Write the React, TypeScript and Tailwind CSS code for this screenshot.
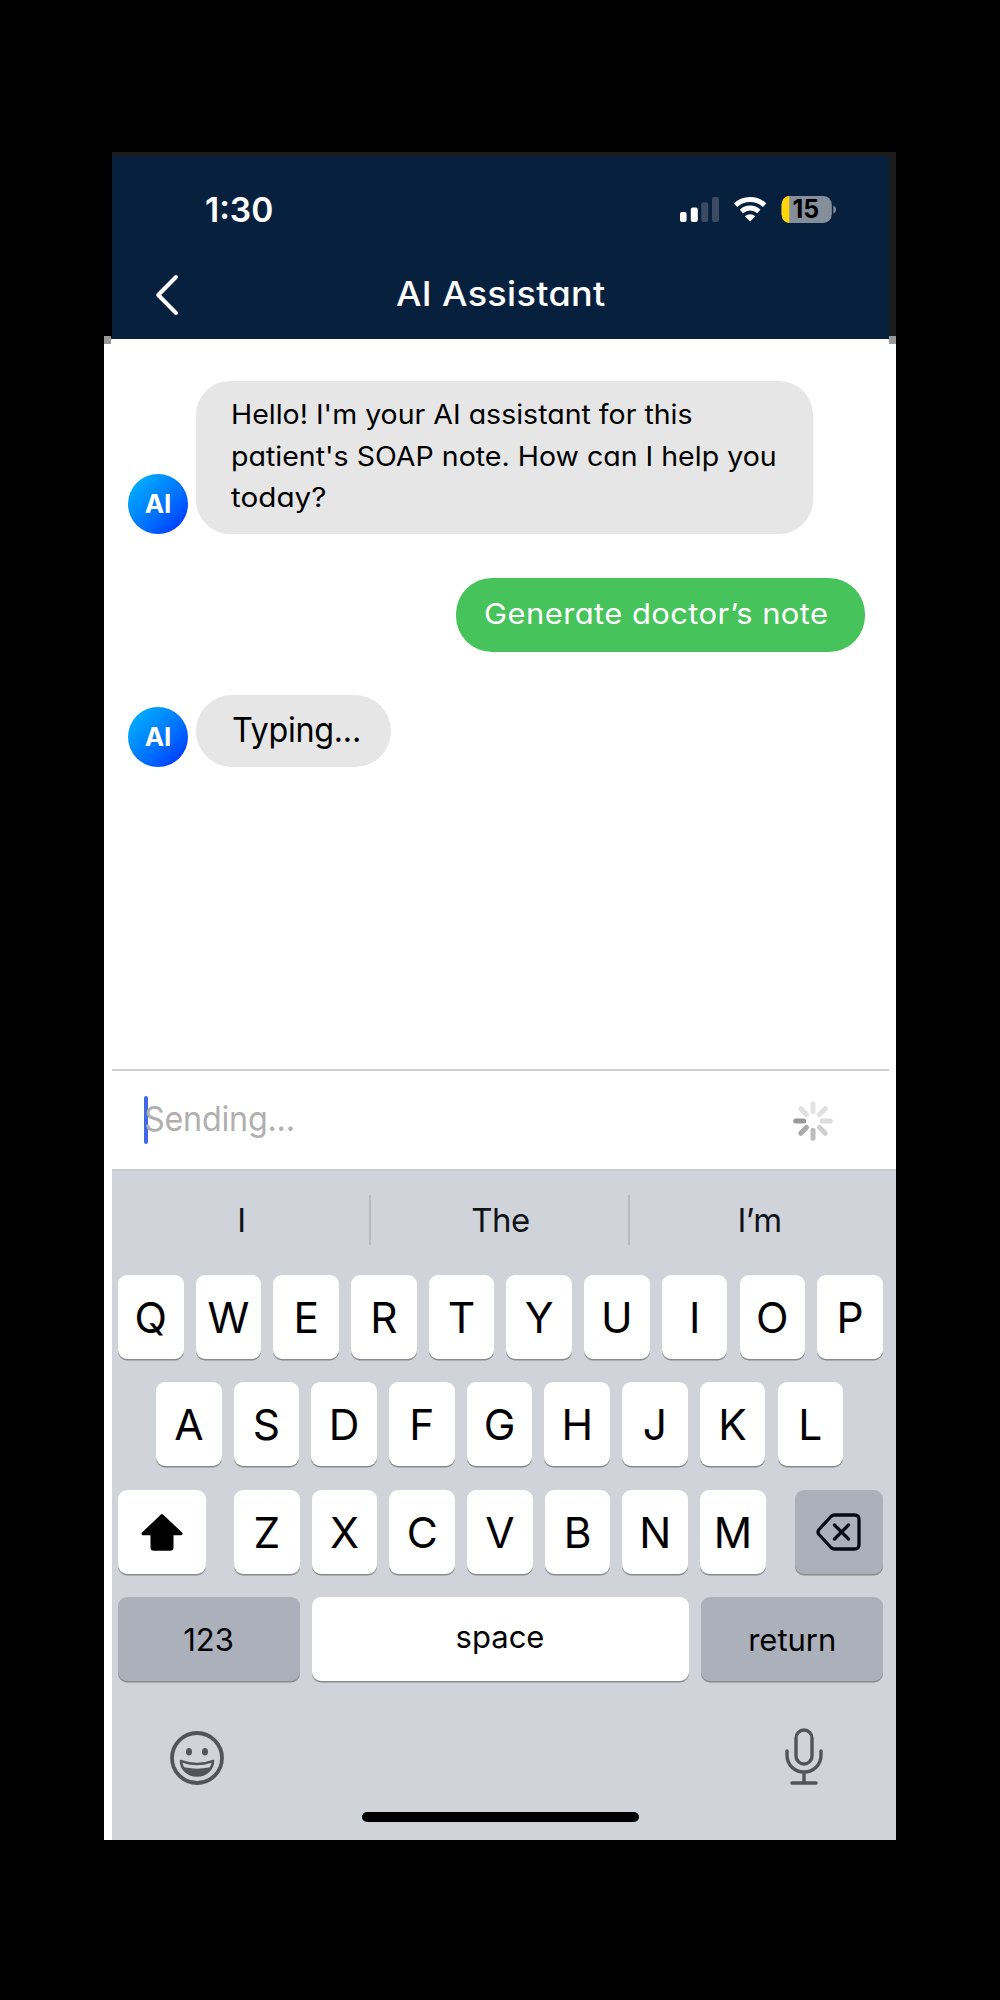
import React from "react";

const INTER = "font-['Inter',sans-serif]";
const GEO = "font-['Inter',sans-serif] [font-feature-settings:'cv11'_1]";

function StatusIcons() {
  return (
    <svg className="block" width="158" height="30" viewBox="679 195 158 30" fill="none">
      <rect x="680" y="212" width="6.6" height="10" rx="2" fill="#fff" />
      <rect x="690.8" y="207.6" width="7" height="14.4" rx="2" fill="#fff" />
      <rect x="701.2" y="202.2" width="7" height="19.8" rx="2" fill="#3a4b63" />
      <rect x="712" y="197" width="7" height="25" rx="2" fill="#3a4b63" />
      <path d="M735.6 205.2a21.2 21.2 0 0 1 29 0" stroke="#fff" strokeWidth="5" />
      <path d="M741.4 211.4a12.8 12.8 0 0 1 17.4 0" stroke="#fff" strokeWidth="4.8" />
      <path d="M744.9 216.2a8 8 0 0 1 10.4 0l-5.2 5.2z" fill="#fff" />
      <rect x="781.6" y="196" width="50.2" height="27" rx="8.5" fill="#858e9b" />
      <path d="M789.3 196v27a7.7 8.5 0 0 1-7.7-8.5v-10a7.7 8.5 0 0 1 7.7-8.5z" fill="#ffd60a" />
      <path d="M833.4 205.4c3.4 1.3 3.4 6.9 0 8.2z" fill="#858e9b" />
    </svg>
  );
}

function Avatar() {
  return (
    <div className={`${INTER} flex h-[60px] w-[60px] shrink-0 items-center justify-center rounded-full bg-linear-to-br from-[#00a8ff] from-15% to-[#0040ff] to-85% text-[26px] leading-none font-bold text-white`}>
      AI
    </div>
  );
}

const SPOKES = ["#e3e3e3", "#e0e0e0", "#dedede", "#cfcfcf", "#bdbdbd", "#a9a9a9", "#989898", "#e0e0e0"];

function Spinner() {
  return (
    <svg className="block" width="42" height="42" viewBox="-21 -21 42 42">
      {SPOKES.map((c, i) => (
        <line key={i} x1="0" y1="-9.2" x2="0" y2="-17.3" stroke={c} strokeWidth="5" strokeLinecap="round" transform={`rotate(${i * 45})`} />
      ))}
    </svg>
  );
}

const KEY = "flex h-[84px] items-center justify-center rounded-[9px] shadow-[0_1.5px_0_#898a8d]";

function Letters({ s }: { s: string }) {
  return (
    <div className="flex gap-[12.1px]">
      {s.split("").map((c) => (
        <div key={c} className={`${KEY} w-[65.6px] bg-white pt-[3px] text-[42.5px] leading-none`}>{c}</div>
      ))}
    </div>
  );
}

export default function App() {
  return (
    <div className="h-[2000px] w-[1000px] overflow-hidden bg-black pt-[152px] pl-[104px]">
      <div className="flex h-[1688px] w-[792px] flex-col bg-white">
        <header className="h-[187px] shrink-0 bg-black pl-[8px]">
          <div className="h-full border-t-4 border-r-7 border-[#1c1c1c] bg-[#07203d] text-white">
            <div className="flex h-[108px] items-center pl-[92px]">
              <span className={`${INTER} mt-[2px] w-[475px] pl-[1px] text-[33.5px] leading-none font-semibold`}>1:30</span>
              <div className="relative">
                <StatusIcons />
                <span className={`${INTER} absolute top-[2px] left-[113.5px] text-[25px] leading-[25px] font-bold text-black`}>15</span>
              </div>
            </div>
            <div className="flex h-[61px] items-center pl-[42px]">
              <svg width="26" height="42" viewBox="0 0 26 42" fill="none" stroke="#fff" strokeWidth="4" strokeLinecap="round" strokeLinejoin="round">
                <path d="M22 3 4.200 21 22 39" />
              </svg>
              <span className={`${GEO} mt-[1px] ml-[216px] origin-left scale-x-[1.075] text-[33.5px] leading-none font-medium tracking-[0.3px] whitespace-nowrap`}>AI Assistant</span>
            </div>
          </div>
        </header>

        <main className="h-[730px] shrink-0">
          <div className="flex h-[42px] justify-between">
            <i className="-mt-[3px] h-2 w-[7px] bg-[#999]" />
            <i className="-mt-[3px] h-2 w-[7px] bg-[#999]" />
          </div>
          <div className="flex items-end gap-2 pl-6">
            <Avatar />
            <div className={`${GEO} h-[153px] w-[617px] rounded-[34px] bg-[#e6e6e6] pt-[13px] pl-[35px] text-[27px] leading-[41.5px] whitespace-nowrap text-black`}>
              <p className="origin-left scale-x-[1.056]">Hello! I'm your AI assistant for this</p>
              <p className="origin-left scale-x-[1.057]">patient's SOAP note. How can I help you</p>
              <p className="origin-left scale-x-[1.1]">today?</p>
            </div>
          </div>
          <div className={`${GEO} mt-[44px] ml-[352px] flex h-[74px] w-[409px] items-center rounded-[36px] bg-[#46c35a] pb-[2px] pl-[28px] text-[28.5px] whitespace-nowrap text-white`}>
            <span className="origin-left scale-x-[1.085] tracking-[0.4px]">Generate doctor’s note</span>
          </div>
          <div className="mt-[43px] flex items-end gap-2 pl-6">
            <Avatar />
            <div className={`${INTER} flex h-[72px] w-[195px] items-center rounded-[36px] bg-[#e6e6e6] pb-[1.5px] pl-[36px] text-[33.5px] whitespace-nowrap text-black`}>
              <span className="origin-left scale-x-[0.965] tracking-[-0.3px]">Typing...</span>
            </div>
          </div>
        </main>

        <div className="ml-2 flex h-[100px] w-[777px] shrink-0 items-center border-t-2 border-[#cfcfcf] pl-8">
          <div className="h-12 w-1 rounded-full bg-[#4169e8]" />
          <span className={`${INTER} -ml-[4px] origin-left scale-x-[0.965] text-[33.5px] leading-none tracking-[-0.25px] whitespace-nowrap text-[#b0b0b0]`}>Sending...</span>
          <div className="mt-[1.5px] mr-[55px] ml-auto"><Spinner /></div>
        </div>

        <section className={`${INTER} ml-2 h-[671px] border-t-2 border-[#c9cacd] bg-[#d0d3da] text-black`}>
          <div className="flex h-[103.5px] items-start pt-[23.5px] text-[33px] leading-[51px] tracking-[-0.5px] text-[#101418]">
            <div className="h-[50px] w-[259px] border-r-2 border-[#b9bbc0] pl-[2px] text-center">I</div>
            <div className="h-[50px] w-[259px] border-r-2 border-[#b9bbc0] pl-[2px] text-center">The</div>
            <div className="h-[50px] w-[259px] text-center">I’m</div>
          </div>
          <div className="flex flex-col gap-[23.5px] pl-[6px]">
            <Letters s="QWERTYUIOP" />
            <div className="pl-[38px]"><Letters s="ASDFGHJKL" /></div>
            <div className="flex">
              <div className={`${KEY} mr-[28.5px] w-[87.5px] bg-white`}>
                <svg width="44" height="38" viewBox="0 0 44 38">
                  <path d="M22 2.500 41 20.700H32V34.500Q32 36.200 30 36.200H14Q12 36.200 12 34.500V20.700H3Z" fill="#000" stroke="#000" strokeWidth="3" strokeLinejoin="round" />
                </svg>
              </div>
              <Letters s="ZXCVBNM" />
              <div className={`${KEY} ml-[29.5px] w-[87.3px] bg-[#abb0bb]`}>
                <svg width="46" height="38" viewBox="0 0 46 38" fill="none" stroke="#060a12" strokeWidth="3.300" strokeLinecap="round" strokeLinejoin="round">
                  <path d="M18.500 2H38.500Q43 2 43 6.500V31.500Q43 36 38.500 36H18.500Q16.500 36 15 34.500L3 21.500Q1 19 3 16.500L15 3.500Q16.500 2 18.500 2Z" />
                  <path d="m18.500 12 14 14m0-14-14 14" />
                </svg>
              </div>
            </div>
            <div className="flex gap-[12px] text-[31px] leading-none">
              <div className={`${KEY} w-[182px] bg-[#abb0bb] pr-[1px]`}>123</div>
              <div className={`${KEY} w-[377px] bg-white pr-[1px] pb-[5px]`}>space</div>
              <div className={`${KEY} w-[181.500px] bg-[#abb0bb] pl-[1px]`}>return</div>
            </div>
          </div>
          <div className="flex h-[130px] items-end justify-between pr-[72px] pb-[25px] pl-[57px]">
            <svg width="56" height="56" viewBox="-28 -28 56 56">
              <circle r="25" fill="none" stroke="#50555b" strokeWidth="3.800" />
              <ellipse cx="-8" cy="-6.300" rx="3" ry="3.800" fill="#50555b" />
              <ellipse cx="8" cy="-6.300" rx="3" ry="3.800" fill="#50555b" />
              <path d="M-16.500 2.500Q0 8.500 16.500 2.500C16.500 11.500 9 18 0 18S-16.500 11.500-16.500 2.500Z" fill="#50555b" stroke="#50555b" strokeWidth="1.500" strokeLinejoin="round" />
              <path d="M-14.500 4.800Q0 9.800 14.500 4.800Q14 7.500 12.800 9.300Q0 12-12.800 9.300Q-14 7.500-14.500 4.800Z" fill="#d0d3da" />
            </svg>
            <svg width="40" height="58" viewBox="-20 0 40 58" fill="none" stroke="#50555b" strokeWidth="3.400" strokeLinecap="round">
              <rect x="-8" y="2" width="16" height="34" rx="8" />
              <path d="M-17 23v4c0 10 7.500 17 17 17s17-7 17-17v-4M0 44v10.500M-12 55h24" />
            </svg>
          </div>
          <div className="mt-[1px] ml-[250px] h-[10px] w-[277px] rounded-full bg-black" />
        </section>
      </div>
    </div>
  );
}
